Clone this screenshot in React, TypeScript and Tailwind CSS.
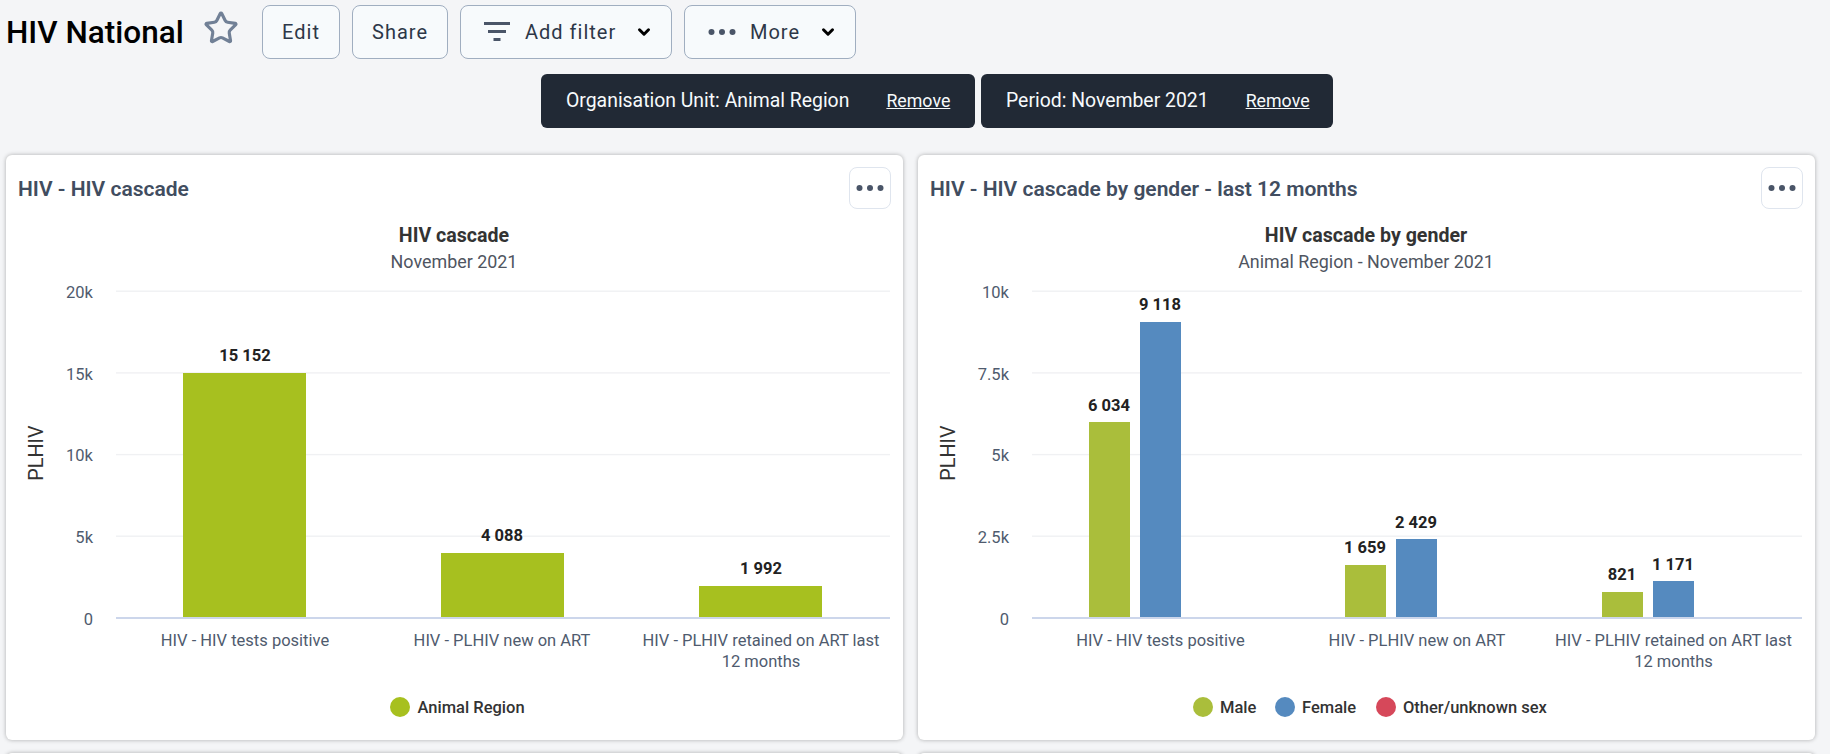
import React from "react";
import { Star, ChevronDown } from "lucide-react";

const F = "Roboto, sans-serif";

function Dots({ className }: { className?: string }) {
  return (
    <svg width="28" height="8" viewBox="0 0 28 8" className={className}>
      <circle cx="3.5" cy="4" r="3" fill="currentColor" />
      <circle cx="14" cy="4" r="3" fill="currentColor" />
      <circle cx="24.5" cy="4" r="3" fill="currentColor" />
    </svg>
  );
}

function Btn({ children, className }: { children: React.ReactNode; className?: string }) {
  return (
    <button
      className={
        "h-[54px] flex items-center rounded-lg border border-[#a0aec0] bg-[#f7fafc] text-[20px] tracking-[0.05em] text-[#2d3748] " +
        (className ?? "")
      }
    >
      {children}
    </button>
  );
}

function Chip({ label, w, gap }: { label: string; w: string; gap: string }) {
  return (
    <div className={"h-[54px] flex items-center rounded-md bg-[#212935] pl-[25px] text-[#f7fafc] " + w}>
      <span className="text-[19.4px] whitespace-nowrap">{label}</span>
      <span className={"text-[17.8px] underline whitespace-nowrap " + gap}>Remove</span>
    </div>
  );
}

type Bar = { x: number; w: number; top: number; color: string; label: string; lx: number; ly: number };
type ChartProps = {
  ox: number;
  title: string;
  subtitle: string;
  cx: number;
  plot: [number, number];
  ticks: string[];
  tickX: number;
  yTitleX: number;
  bars: Bar[];
  cats: { x: number; lines: string[] }[];
  legend: { cx: number; tx: number; color: string; label: string }[];
};

const GRID = [291, 372.7, 454.4, 536, 617.7];

function Chart({ ox, title, subtitle, cx, plot, ticks, tickX, yTitleX, bars, cats, legend }: ChartProps) {
  return (
    <svg viewBox={`${ox} 215 897 525`} width="897" height="525" className="block" fontFamily={F}>
      <text x={cx} y={242} textAnchor="middle" fontSize="19.6" fontWeight="700" fill="#333333">{title}</text>
      <text x={cx} y={268} textAnchor="middle" fontSize="17.9" fill="#4f5561">{subtitle}</text>
      {GRID.slice(0, 4).map((y) => (
        <rect key={y} x={plot[0]} y={y - 0.5} width={plot[1] - plot[0]} height="1.4" fill="#f0f1f3" />
      ))}
      {ticks.map((t, i) => (
        <text key={t} x={tickX} y={GRID[i] + 7} textAnchor="end" fontSize="16.5" fill="#4f5b6e">{t}</text>
      ))}
      <text
        x={yTitleX}
        y={453}
        textAnchor="middle"
        fontSize="19.8"
        fill="#333333"
        transform={`rotate(-90 ${yTitleX} 453)`}
        dominantBaseline="central"
      >
        PLHIV
      </text>
      {bars.map((b) => (
        <g key={b.label}>
          <rect x={b.x} y={b.top} width={b.w} height={617 - b.top} fill={b.color} />
          <text x={b.lx} y={b.ly} textAnchor="middle" fontSize="16.5" fontWeight="700" fill="#222222">{b.label}</text>
        </g>
      ))}
      <rect x={plot[0]} y={617} width={plot[1] - plot[0]} height="2" fill="#ccd6eb" />
      {cats.map((c) =>
        c.lines.map((l, i) => (
          <text key={l} x={c.x} y={646 + i * 21} textAnchor="middle" fontSize="16.5" fill="#4f5b6e">{l}</text>
        ))
      )}
      {legend.map((l) => (
        <g key={l.label}>
          <circle cx={l.cx} cy={707} r={10} fill={l.color} />
          <text x={l.tx} y={713} fontSize="16.5" fontWeight="500" fill="#333333">{l.label}</text>
        </g>
      ))}
    </svg>
  );
}

function Card({ heading, children }: { heading: string; children: React.ReactNode }) {
  return (
    <div className="h-[585px] rounded-md bg-white shadow-[0_0_4px_rgba(0,0,0,0.3)]">
      <div className="h-[60px] pt-[12px] pl-[12px] pr-[12px] flex justify-between">
        <h2 className="text-[21px] leading-[44px] font-semibold text-[#414d60]">{heading}</h2>
        <button className="w-[42px] h-[42px] flex items-center justify-center rounded-lg border border-[#dfe5ee] bg-white text-[#4a5568]">
          <Dots />
        </button>
      </div>
      {children}
    </div>
  );
}

const LIME = "#a7c01f";
const M = "#aabe3b";
const W = "#558abf";
const CATS = ["HIV - HIV tests positive", "HIV - PLHIV new on ART"];

export default function App() {
  return (
    <div className="h-[754px] w-[1830px] overflow-hidden bg-[#f4f5f7] font-['Roboto',sans-serif]">
      <div className="flex items-center pt-[5px] pl-[6px]">
        <h1 className="w-[178px] whitespace-nowrap text-[31.5px] leading-[56px] h-[54px] font-medium text-black">HIV National</h1>
        <Star size={36} strokeWidth={2.1} className="ml-[19px] mb-[8px] text-[#718096]" />
        <div className="ml-[23px] flex gap-[12px]">
          <Btn className="w-[78px] justify-center">Edit</Btn>
          <Btn className="w-[96px] justify-center">Share</Btn>
          <Btn className="w-[212px] pl-[23px]">
            <svg width="27" height="20" viewBox="0 0 27 20" className="mr-[14px] text-[#4a5568]">
              <rect x="0" y="0" width="26" height="3" fill="currentColor" />
              <rect x="4" y="8" width="18" height="3" fill="currentColor" />
              <rect x="9.5" y="16" width="7" height="3" fill="currentColor" />
            </svg>
            Add filter
            <ChevronDown size={18} strokeWidth={4} className="ml-[19px] text-black" />
          </Btn>
          <Btn className="w-[172px] pl-[23px]">
            <Dots className="mr-[14px] text-[#4a5568]" />
            More
            <ChevronDown size={18} strokeWidth={4} className="ml-[19px] text-black" />
          </Btn>
        </div>
      </div>

      <div className="mt-[15px] pl-[541px] flex gap-[6px]">
        <Chip label="Organisation Unit: Animal Region" w="w-[434px]" gap="ml-[37px]" />
        <Chip label="Period: November 2021" w="w-[352px]" gap="ml-[37px]" />
      </div>

      <div className="mt-[27px] pl-[6px] grid grid-cols-[897px_897px] gap-x-[15px] gap-y-[13px]">
        <Card heading="HIV - HIV cascade">
          <Chart
            ox={6}
            title="HIV cascade"
            subtitle="November 2021"
            cx={454}
            plot={[116, 890]}
            ticks={["20k", "15k", "10k", "5k", "0"]}
            tickX={93}
            yTitleX={36}
            bars={[
              { x: 183, w: 123, top: 373, color: LIME, label: "15 152", lx: 245, ly: 361 },
              { x: 441, w: 123, top: 553, color: LIME, label: "4 088", lx: 502, ly: 541 },
              { x: 699, w: 123, top: 586, color: LIME, label: "1 992", lx: 761, ly: 574 },
            ]}
            cats={[
              { x: 245, lines: [CATS[0]] },
              { x: 502, lines: [CATS[1]] },
              { x: 761, lines: ["HIV - PLHIV retained on ART last", "12 months"] },
            ]}
            legend={[{ cx: 400, tx: 417.5, color: LIME, label: "Animal Region" }]}
          />
        </Card>
        <Card heading="HIV - HIV cascade by gender - last 12 months">
          <Chart
            ox={918}
            title="HIV cascade by gender"
            subtitle="Animal Region - November 2021"
            cx={1366}
            plot={[1032, 1802]}
            ticks={["10k", "7.5k", "5k", "2.5k", "0"]}
            tickX={1009}
            yTitleX={948}
            bars={[
              { x: 1089, w: 41, top: 422, color: M, label: "6 034", lx: 1109, ly: 411 },
              { x: 1140, w: 41, top: 322, color: W, label: "9 118", lx: 1160, ly: 310 },
              { x: 1345, w: 41, top: 565, color: M, label: "1 659", lx: 1365, ly: 553 },
              { x: 1396, w: 41, top: 539, color: W, label: "2 429", lx: 1416, ly: 528 },
              { x: 1602, w: 41, top: 592, color: M, label: "821", lx: 1622, ly: 580 },
              { x: 1653, w: 41, top: 581, color: W, label: "1 171", lx: 1673, ly: 570 },
            ]}
            cats={[
              { x: 1160.5, lines: [CATS[0]] },
              { x: 1417, lines: [CATS[1]] },
              { x: 1673.5, lines: ["HIV - PLHIV retained on ART last", "12 months"] },
            ]}
            legend={[
              { cx: 1203, tx: 1220, color: M, label: "Male" },
              { cx: 1285, tx: 1302, color: W, label: "Female" },
              { cx: 1386, tx: 1403, color: "#d6485a", label: "Other/unknown sex" },
            ]}
          />
        </Card>
        <div className="h-[200px] rounded-md bg-white shadow-[0_0_4px_rgba(0,0,0,0.3)]" />
        <div className="h-[200px] rounded-md bg-white shadow-[0_0_4px_rgba(0,0,0,0.3)]" />
      </div>
    </div>
  );
}
